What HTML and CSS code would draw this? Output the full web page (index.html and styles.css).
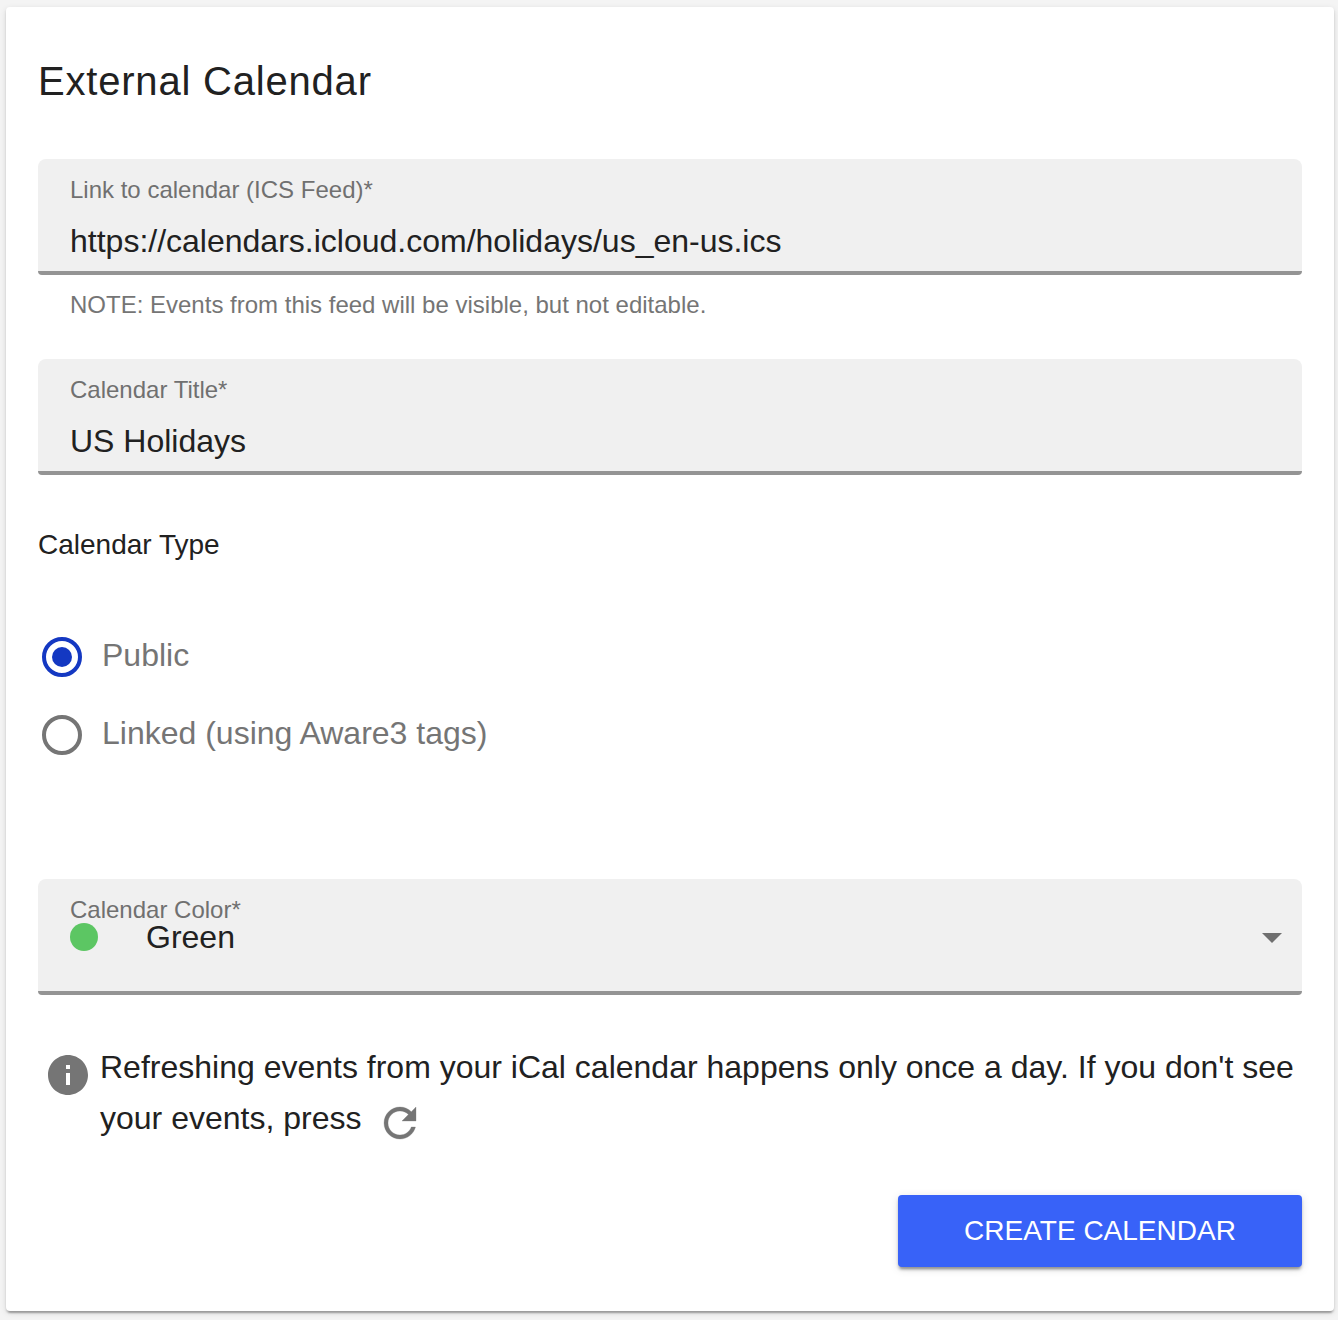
FILE: index.html
```html
<!DOCTYPE html>
<html lang="en">
<head>
    <meta charset="UTF-8">
    <meta name="viewport" content="width=device-width, initial-scale=1.0">
    <title>External Calendar</title>
    <link rel="stylesheet" href="styles.css">
</head>
<body>
    <main class="card">
        <h1 class="card-title">External Calendar</h1>

        <div class="field">
            <div class="field-label">Link to calendar (ICS Feed)*</div>
            <div class="field-value">https://calendars.icloud.com/holidays/us_en-us.ics</div>
        </div>
        <p class="hint">NOTE: Events from this feed will be visible, but not editable.</p>

        <div class="field">
            <div class="field-label">Calendar Title*</div>
            <div class="field-value">US Holidays</div>
        </div>

        <!-- Calendar type -->
        <h2 class="section-title">Calendar Type</h2>
        <div class="radio-group" role="radiogroup">
            <div class="radio-row" role="radio" aria-checked="true">
                <span class="radio checked"></span>
                <span class="radio-label">Public</span>
            </div>
            <div class="radio-row" role="radio" aria-checked="false">
                <span class="radio"></span>
                <span class="radio-label">Linked (using Aware3 tags)</span>
            </div>
        </div>

        <!-- Color select -->
        <div class="field">
            <div class="field-label">Calendar Color*</div>
            <div class="select-row">
                <span class="color-dot"></span>
                <span>Green</span>
                <span class="arrow"></span>
            </div>
        </div>

        <div class="info">
            <svg class="icon info-icon" viewBox="0 0 24 24"><path d="M12 2C6.48 2 2 6.48 2 12s4.48 10 10 10 10-4.480 10-10S17.520 2 12 2zm1 15h-2v-6h2v6zm0-8h-2V7h2v2z"/></svg>
            <div class="info-text">
                <div>Refreshing events from your iCal calendar happens only once a day. If you don't see</div>
                <div class="info-line">
                    <span>your events, press</span>
                    <svg class="icon refresh-icon" viewBox="0 0 24 24"><path d="M17.650 6.350C16.200 4.900 14.210 4 12 4c-4.420 0-7.990 3.580-7.990 8s3.570 8 7.990 8c3.730 0 6.840-2.550 7.730-6h-2.080c-.820 2.330-3.040 4-5.650 4-3.310 0-6-2.690-6-6s2.690-6 6-6c1.660 0 3.140.690 4.220 1.780L13 11h7V4l-2.350 2.350z"/></svg>
                </div>
            </div>
        </div>

        <button class="create-btn" type="button">CREATE CALENDAR</button>
    </main>
</body>
</html>
```

FILE: styles.css
```css
:root {
    --primary: #3862f8;
    --radio: #1438c2;
    --text: #212121;
    --muted: #757575;
    --fill: #f0f0f0;
}

* {
    box-sizing: border-box;
}

body {
    margin: 0;
    padding: 7px 4px 9px 6px;
    height: 1320px;
    background: #f4f4f4;
    color: var(--text);
    font-family: Helvetica, "Liberation Sans", Arial, sans-serif;
    font-size: 32px;
    overflow: hidden;
}

.card {
    display: flex;
    flex-direction: column;
    height: 1304px;
    padding: 50px 32px 44px;
    background: #fff;
    border-radius: 4px;
    box-shadow: 0 4px 2px -2px rgba(0,0,0,0.2), 0 2px 2px 0 rgba(0,0,0,0.14), 0 2px 6px 0 rgba(0,0,0,0.12);
}

.card-title {
    margin: 0 0 54px;
    font-size: 40px;
    font-weight: 400;
    line-height: 48px;
    letter-spacing: 0.8px;
}

/* Filled text fields */
.field {
    height: 116px;
    flex: none;
    padding: 17px 32px 0;
    background: var(--fill);
    border-bottom: 4px solid #949494;
    border-radius: 8px 8px 4px 4px;
}

.field-label {
    color: #707070;
    font-size: 24px;
    line-height: 28px;
}

.field-value {
    margin-top: 17px;
    line-height: 40px;
}

.hint {
    margin: 16px 32px 40px;
    color: var(--muted);
    font-size: 24px;
    line-height: 28px;
}

.section-title {
    margin: 53px 0 75px;
    font-size: 28px;
    font-weight: 400;
    line-height: 34px;
}

/* Radio buttons */
.radio-group {
    display: flex;
    flex-direction: column;
    gap: 38px;
    margin: 0 0 124px 4px;
}

.radio-row {
    display: flex;
    gap: 20px;
    height: 40px;
}

.radio {
    display: grid;
    place-items: center;
    width: 40px;
    height: 40px;
    border: 4px solid var(--muted);
    border-radius: 50%;
}

.radio.checked {
    border-color: var(--radio);
}

.radio.checked::after {
    content: '';
    width: 20px;
    height: 20px;
    border-radius: 50%;
    background: var(--radio);
}

.radio-label {
    color: var(--muted);
    line-height: 36px;
}

/* Select */
.select-row {
    display: flex;
    align-items: center;
    height: 40px;
    margin: -7px -12px 0 0;
}

.color-dot {
    width: 28px;
    height: 28px;
    margin-right: 48px;
    border-radius: 50%;
    background: #5cc663;
}

.arrow {
    margin: 2px 0 0 auto;
    border: 10px solid transparent;
    border-top-color: #6f6f6f;
    border-bottom: 0;
}

/* Info text */
.info {
    display: flex;
    gap: 8px;
    margin: 47px -32px 51px 6px;
    line-height: 51px;
    white-space: nowrap;
}

.icon {
    flex: none;
    width: 48px;
    height: 48px;
    fill: var(--muted);
}

.info-icon {
    margin-top: 9px;
}

.info-line {
    display: flex;
    gap: 15px;
    height: 51px;
}

.refresh-icon {
    margin-top: 6px;
    stroke: var(--muted);
    stroke-width: 0.15;
}

.create-btn {
    align-self: flex-end;
    width: 404px;
    height: 72px;
    padding: 0;
    border: none;
    border-radius: 4px;
    background: var(--primary);
    color: #fff;
    font-family: inherit;
    font-size: 28px;
    box-shadow: 0 4px 2px -2px rgba(0,0,0,0.2), 0 3px 3px 0 rgba(0,0,0,0.2), 0 2px 10px 0 rgba(0,0,0,0.12);
}
```
